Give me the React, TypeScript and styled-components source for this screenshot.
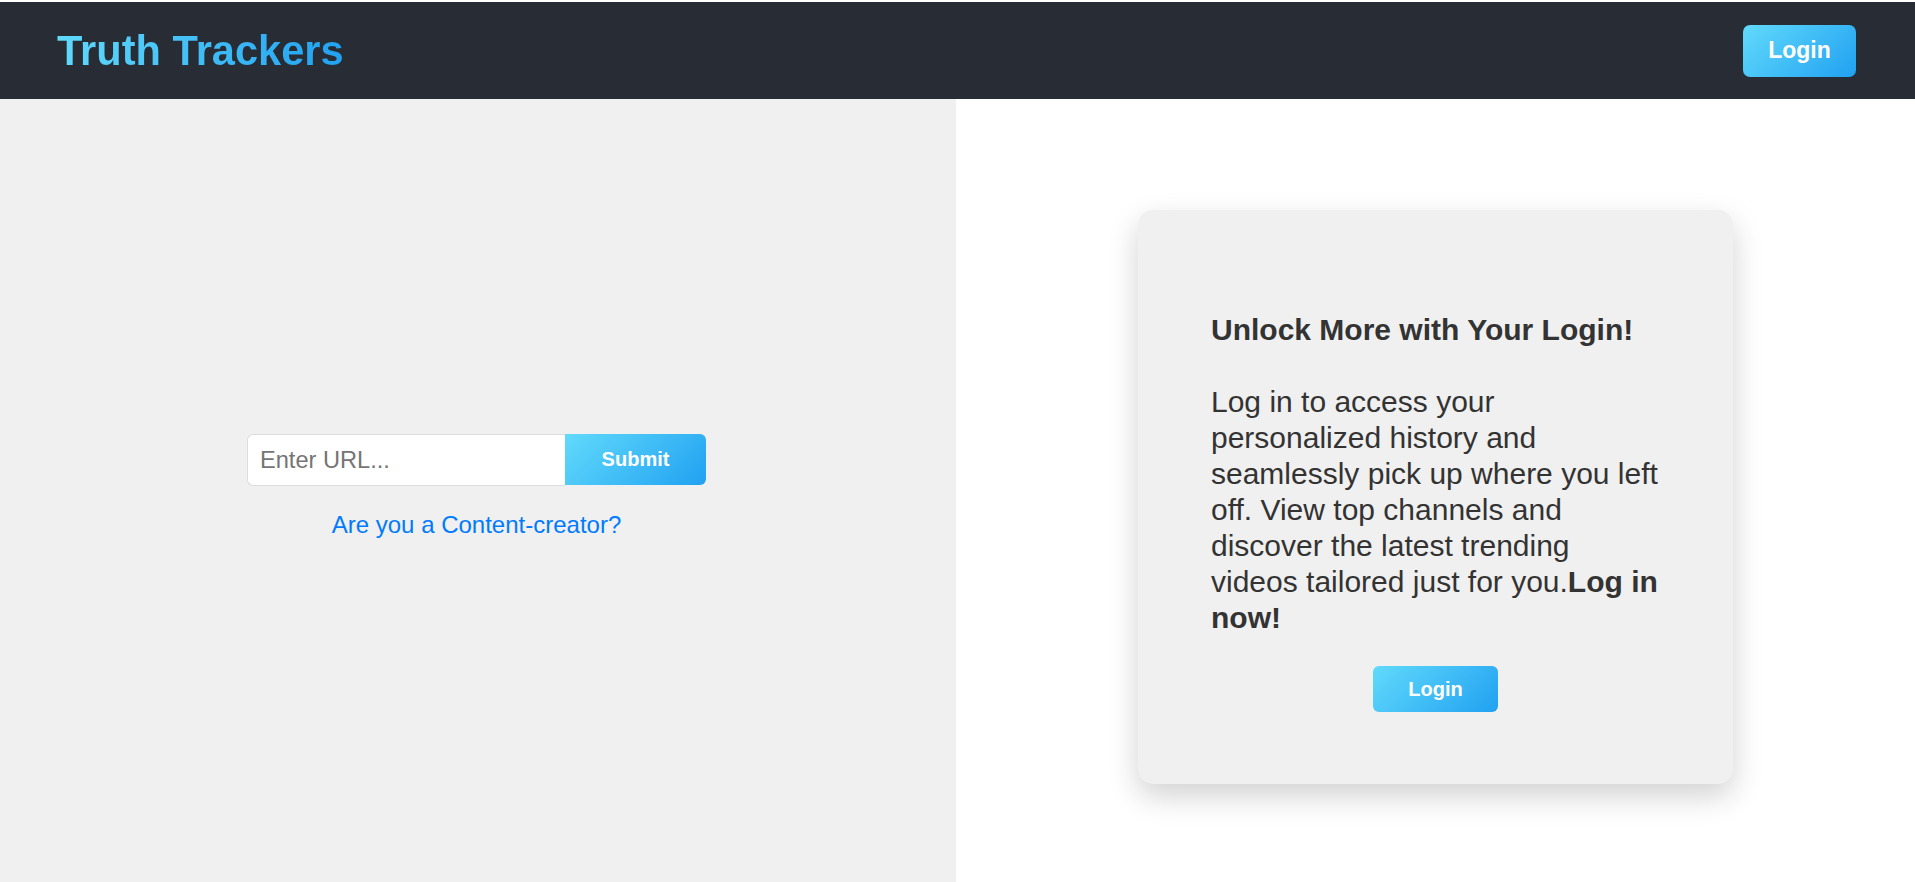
import React from "react";
import styled, { createGlobalStyle } from "styled-components";

const GlobalStyle = createGlobalStyle`
  html, body {
    margin: 0;
    padding: 0;
    background: #ffffff;
    font-family: "Liberation Sans", Arial, Helvetica, sans-serif;
  }
  * { box-sizing: border-box; }
`;

const Page = styled.div`
  display: flex;
  flex-direction: column;
  height: 882px;
  padding-top: 2px;
  background: #ffffff;
  overflow: hidden;
`;

const Header = styled.header`
  flex: 0 0 97px;
  display: flex;
  align-items: center;
  justify-content: space-between;
  padding: 0 59px 0 57px;
  background: #282c34;
`;

const Brand = styled.h1`
  margin: 0;
  font-size: 41.6px;
  font-weight: 700;
  line-height: 1;
  background: linear-gradient(90deg, #61dafb, #21a1f1);
  -webkit-background-clip: text;
  background-clip: text;
  color: transparent;
`;

const GradientButton = styled.button<{ $size: "lg" | "md" }>`
  border: none;
  cursor: pointer;
  color: #ffffff;
  font-family: "Liberation Sans", Arial, Helvetica, sans-serif;
  font-weight: 700;
  background: linear-gradient(135deg, #61dafb, #21a1f1);
  border-radius: ${(p) => (p.$size === "lg" ? "7px" : "6px")};
  font-size: ${(p) => (p.$size === "lg" ? "23px" : "20px")};
  width: ${(p) => (p.$size === "lg" ? "113px" : "125px")};
  height: ${(p) => (p.$size === "lg" ? "52px" : "46px")};
  padding: 0;
`;

const Main = styled.main`
  flex: 1;
  display: grid;
  grid-template-columns: 956px 1fr;
`;

const LeftPane = styled.section`
  display: flex;
  flex-direction: column;
  align-items: center;
  justify-content: center;
  background: #f0f0f0;
  padding-bottom: 8px;
  padding-right: 3px;
`;

const UrlForm = styled.form`
  display: flex;
  height: 52px;
`;

const UrlInput = styled.input`
  width: 318px;
  height: 52px;
  padding: 0 12px;
  border: 1px solid #dddddd;
  border-right: none;
  border-radius: 6px 0 0 6px;
  background: #ffffff;
  font-family: "Liberation Sans", Arial, Helvetica, sans-serif;
  font-size: 23.6px;
  color: #333333;
  outline: none;
  &::placeholder {
    color: #757575;
  }
`;

const SubmitButton = styled.button`
  width: 141px;
  height: 51px;
  border: none;
  border-radius: 0 6px 6px 0;
  background: linear-gradient(135deg, #61dafb, #21a1f1);
  color: #ffffff;
  font-family: "Liberation Sans", Arial, Helvetica, sans-serif;
  font-size: 20px;
  font-weight: 700;
  cursor: pointer;
`;

const CreatorLink = styled.a`
  margin-top: 25px;
  font-size: 24px;
  color: #007bff;
  text-decoration: none;
  cursor: pointer;
`;

const RightPane = styled.section`
  display: flex;
  align-items: center;
  justify-content: center;
  background: #ffffff;
  padding-top: 13px;
`;

const Card = styled.div`
  width: 595px;
  display: flex;
  flex-direction: column;
  align-items: center;
  padding: 72px 73px;
  background: #f0f0f0;
  border-radius: 15px;
  box-shadow: 0 12px 30px rgba(0, 0, 0, 0.18);
`;

const CardText = styled.p`
  align-self: stretch;
  margin: 30px 0;
  font-size: 30px;
  line-height: 36px;
  color: #333333;
`;

export default function App() {
  return (
    <>
      <GlobalStyle />
      <Page>
        <Header>
          <Brand>Truth Trackers</Brand>
          <GradientButton $size="lg">Login</GradientButton>
        </Header>
        <Main>
          <LeftPane>
            <UrlForm onSubmit={(e) => e.preventDefault()}>
              <UrlInput type="text" placeholder="Enter URL..." />
              <SubmitButton type="submit">Submit</SubmitButton>
            </UrlForm>
            <CreatorLink>Are you a Content-creator?</CreatorLink>
          </LeftPane>
          <RightPane>
            <Card>
              <CardText>
                <strong>Unlock More with Your Login!</strong>
                <br />
                <br />
                Log in to access your personalized history and seamlessly pick
                up where you left off. View top channels and discover the latest
                trending videos tailored just for you.<strong>Log in now!</strong>
              </CardText>
              <GradientButton $size="md">Login</GradientButton>
            </Card>
          </RightPane>
        </Main>
      </Page>
    </>
  );
}
